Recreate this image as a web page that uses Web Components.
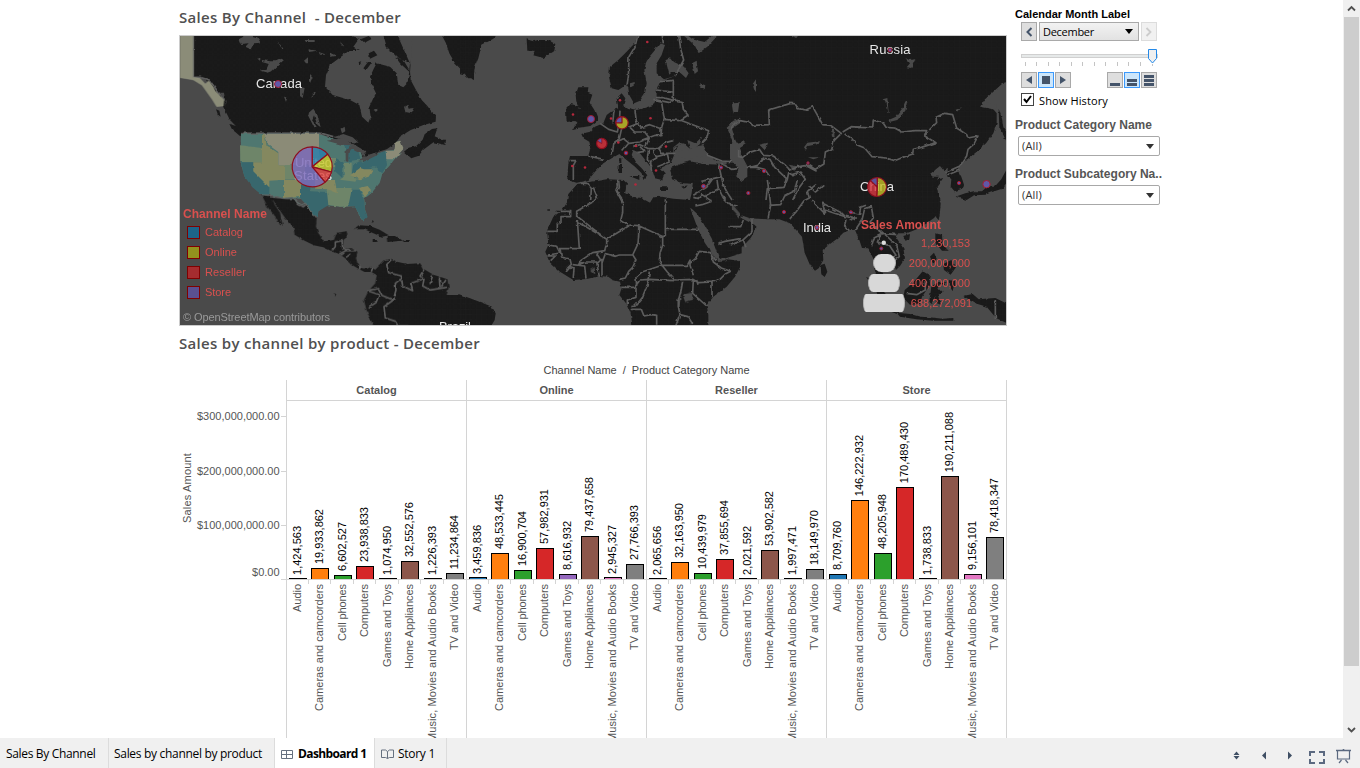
<!DOCTYPE html>
<html lang="en"><head><meta charset="utf-8"><title>Sales dashboard</title>
<style>html,body{margin:0;height:100%;overflow:hidden;background:#fff}body{font-family:"Liberation Sans",Arial,sans-serif}</style></head>
<body><sales-workbook></sales-workbook>
<script>
const define=(name,html,init)=>customElements.define(name,class extends HTMLElement{
 connectedCallback(){if(this.shadowRoot)return;const r=this.attachShadow({mode:'open'});r.innerHTML=typeof html==='function'?html(this):html;if(init)init(this,r);}
});

/* Text tracked to a given advance length (attribute w), horizontal or upright (attribute v). */
define('tracked-text',`<style>:host{display:inline-block;white-space:pre;line-height:1.2}:host([v]) span{writing-mode:vertical-rl;transform:rotate(180deg)}span{display:inline-block}</style><span><slot></slot></span>`,(el,r)=>{
 const w=+el.getAttribute('w');if(!w)return;const s=r.querySelector('span');const b=s.getBoundingClientRect();
 const n=el.textContent.length;s.style.letterSpacing=((w-(el.hasAttribute('v')?b.height:b.width))/n)+'px';
});

define('world-map',`
<style>
:host{display:block;position:relative;box-sizing:border-box;width:828px;height:291px;border:1px solid #ccc;background:#4a4a4a;overflow:hidden}
svg{display:block}
.land{fill:#1a1a1a}.b{fill:none;stroke:#5c5c5c;stroke-width:5;stroke-linejoin:round}.w{fill:#4a4a4a}
.t{font:13px "Liberation Sans",sans-serif;fill:#e6e6e6}
.d{fill:#6058a8;stroke:#a51c30;stroke-width:1}
.key,.size{position:absolute;color:#d9504e;font-size:11px;line-height:20px}
.key{left:3px;top:168px}.key b,.size b{display:block;font-size:12px;height:18px;line-height:20px}
.row{display:flex;align-items:center;gap:5px;height:20px;padding-left:4px}
.key tracked-text{position:relative;top:1px}.key b tracked-text{top:0}
.sw{width:11px;height:11px;border:1px solid #800000}
.size{left:681px;top:179px;width:116px}
.size .row{padding:0;gap:0}.m{width:44px;display:flex;justify-content:center;margin-left:1px}.m i{display:block;height:18px;background:#d8d8d8;border:solid #b4b4b4;border-width:0 1.5px;box-sizing:border-box}
.n{margin-left:auto}
.osm{position:absolute;left:3px;top:275px;font-size:11px;color:#999;line-height:12px}
</style>
<svg width="826" height="289" viewBox="180 36 826 289">
<defs><pattern id="g" width="16" height="16" patternUnits="userSpaceOnUse" x="178" y="37"><path d="M16 0V16H0" fill="none" stroke="#222" stroke-width="1"/></pattern>
<filter id="rough" x="-2%" y="-2%" width="104%" height="104%" color-interpolation-filters="sRGB"><feTurbulence type="fractalNoise" baseFrequency=".19" numOctaves="2" seed="4"/><feDisplacementMap in="SourceGraphic" scale="3" xChannelSelector="R" yChannelSelector="G"/></filter>
<g id="land">
 <g transform="translate(170,0) scale(.33333)">
  <path d="M70 100H715L700 115 712 150 722 185 720 215 722 240 738 270 755 300 772 318 785 335 798 345 797 365 760 375 722 390 690 410 678 428 650 448 625 455 600 480 570 490 555 470 510 425 455 402 220 400 212 404 190 385 182 372 200 380 180 360 162 325 150 300 128 260 108 240 90 232 70 232ZM138 328l10 4 4 18-8-6ZM178 372l20 6 24 26-12 4-24-20ZM702 455l14-12 22-4 20-20 6-16 22-16 16-2-8 24 22 10 12 0-2 16-16-4-20-4-30 22-14 18-22 8ZM815 104H912V240L895 232 880 215 855 190 838 160 828 130Z"/>
 </g>
 <g transform="translate(170,180) scale(.33333)">
  <path d="M275 45L300 50 310 68 330 98 338 137 322 126 312 104 295 84ZM296 48L350 55 375 55 385 75 400 80 410 72 425 95 440 112 438 140 445 160 462 184 492 180 500 158 530 154 532 166 520 184 518 206 545 205 562 215 558 235 562 250 572 264 590 267 604 260 615 270 645 240 664 236 680 245 712 252 750 250 762 268 790 284 832 298 836 320 830 345 870 345 905 360V440H612L600 415 590 392 582 360 596 332 616 310 620 285 604 276 584 276 568 268 548 256 530 238 508 222 486 214 460 202 432 196 404 182 374 164 370 140 346 115 322 80ZM552 148l14-12 34 2 30 12 26 16-20 4-26-10-26-12ZM650 168l28 0 20 14-46 4ZM608 180h14v6h-14ZM700 180h16v6h-16ZM605 120l6 4-4 6ZM492 340l6 2-2 8Z"/>
 </g>
 <g transform="translate(460,30) scale(.33333)">
  <path d="M0 10H115L100 26 65 45 55 85 45 110 40 144 25 145 12 133 0 130ZM200 28l20 6 14-4 30 0 22 12-4 22-32 20-30-8 4-14-22 0Z"/>
  <path d="M355 172l30 0-2 16 14 6-8 24 14 22 8 20 0 12-20 16-40 6-16 4 20-18-14-8 14-14-10-14 14-8-10-22-2-20ZM318 238l14-16 24 6 0 26-8 18-28 4Z"/>
  <path d="M535 10L524 40 500 65 475 90 450 110 447 140 455 175 475 180 498 165 505 175 508 195 522 220 540 212 555 190 560 160 553 120 560 90 585 60 600 40 615 45 605 75 590 100 590 130 612 148 645 138 600 155 590 180 590 205 580 225 560 232 530 240 505 234 490 225 496 205 485 190 470 205 475 235 460 240 440 255 430 280 405 290 390 305 364 312 370 325 388 335 392 352 385 378 330 378 325 400 322 450 350 458 385 450 405 425 430 400 455 385 478 372 500 390 525 410 545 430 550 450 562 436 545 415 528 398 515 375 520 360 540 370 560 395 575 415 585 445 606 450 614 430 600 415 632 400 640 380 655 345 672 340 690 358 704 350 730 345 745 375 770 392 840 400V-10ZM630 415L660 402 690 394 730 402 780 404 845 400V520H690L708 462 670 460 636 448ZM508 438h30v12ZM476 405h10v24h-10ZM478 385h6v14h-6ZM600 472h24v8h-24ZM664 470l16-4-8 10ZM320 520L330 490 352 462 400 455 440 448 490 450 500 460 494 490 515 510 540 520Z"/>
 </g>
 <g transform="translate(460,180) scale(.33333)">
  <path d="M350 15L395 5 470 0 500 10 495 40 520 50 545 55 570 68 580 52 605 50 640 56 690 60 695 40 700 0H845V220L780 240 768 210 755 175 730 130 710 100 690 82 700 110 715 150 735 190 760 225 775 246 840 240V262L825 290 800 320 760 350 740 375 745 405 745 440H518L512 400 500 372 478 345 485 325 480 305 458 300 445 290 420 288 380 297 340 300 300 275 268 245 256 215 265 195 262 160 262 150 280 110 305 92 320 70 325 42ZM262 88h8v4h-8ZM285 92h14v4h-14ZM-5 342L30 355 60 366 96 380 107 400 104 420 92 440H-5Z"/>
 </g>
 <g transform="translate(730,30) scale(.33333)"><path d="M-10 10H832V155L818 160 790 185 765 208 750 230 782 228 800 250 800 280 790 310 768 340 742 364 712 388 690 402 682 420 694 440 702 464 696 476 674 484 662 470 664 448 650 434 654 414 640 420 630 408 600 432 616 450 640 444 620 470 628 510H-10ZM806 236l10 30 4 26 12 18V340l-24-50ZM676 500l30-10 26-6 24 0 14-12 28-6 16-18 16-30V458l-14 18-30 10-20 8-34 2-22 14Z"/></g>
 <g transform="translate(730,180) scale(.33333)"><path d="M-10 -10H626L610 20 622 48 632 70 630 95 612 114 590 130 560 148 530 160 508 160 498 172 520 205 525 235 510 258 498 270 490 246 468 236 450 230 446 250 452 270 466 290 478 320 466 322 440 290 432 262 432 240 415 205 396 204 388 180 375 150 360 150 340 158 324 174 300 192 278 210 280 240 266 265 255 272 240 255 224 218 216 170 190 140 180 130 148 118 110 118 60 115 30 104 14 90 -4 60 -6 90 20 108 45 120 76 136 75 150 62 174 40 198 0 218 -10 215ZM272 255l12-4 8 24-8 16-10-8ZM-10 238L10 240 0 280-10 300ZM520 168l20-6-2 16-12 4ZM622 95l8 2-4 24-8-10ZM616 160l20 4 2 30 18 18-20 0-20-24ZM640 252l24-12 14 22-16 22-20-14ZM600 230l12-12 8 18-10 16ZM408 290l24 16 30 30 30 34 10 32-24-8-32-46ZM524 330l24-20 30-36 24 14-6 32-20 30-6 22-30 2-20-20ZM604 320l14-10 36-4-28 12-6 14 22 0-18 14 8 28-14-6-2-20-10 24-8-6ZM500 398l40 4 30 8 30 2 40 4 30-2 0 8-60 0-50-4-50-8ZM660 300l14 4-6 30-8-14ZM700 348l28-6 18 16 50-4 32 16V428l-30-14-28-34-34-10Z"/></g>
</g></defs>
<g filter="url(#rough)"><use href="#land" class="land"/></g>
<use href="#land" fill="url(#g)" opacity=".8"/>
<g filter="url(#rough)" class="w">
 <g transform="translate(170,0) scale(.33333)">
 <path d="M540 150L500 180 480 195 468 225 465 260 488 285 540 300 568 315 576 350 595 368 602 350 598 320 612 290 618 280 606 255 600 230 612 205 620 190 660 200 680 220 685 255 700 262 712 250 718 215 690 190 676 170 700 180 718 210 720 190 680 170 650 140 640 104H562L545 110 566 118 550 140 570 150ZM682 105l40 90 5-90ZM206 118l26-14 30 8 10 16-20 2-10 18-16-8 10-10-24 2ZM270 212l20-6 6-14-20-6 0-6 24 4 18 0 16-8 8 4-16 14-18 18-16 6ZM322 122l18 24-4 2ZM402 182l12-10 0 18-6 0ZM404 120h30v6h-26ZM416 148l26 4-26 4ZM446 156l24 8-20 0ZM480 158l20 10-20 2ZM342 290l10 2-4 14ZM390 260l14 4-6 30-8-6ZM420 222l8 8-8 20ZM422 290l16-16-4 10ZM412 342l18-16 12 18 10 38-10-8-10-28-6 14 14 20-8 2ZM510 124l14 16-8-4ZM702 320l10-6 4 12 18-2-8 16-20-4ZM610 330l12-4 0 10ZM490 412L520 402 548 412 566 428 540 426ZM528 484l2-28 14-16 8 4-12 24 0 20ZM552 436l26 14 10 18-14-2 -4 22 8-4 32-14-4-8-30 8-4-20-16-12ZM150 278h12l6 40-6-20ZM262 174l10 4-4 4ZM512 388l12-8 2 14-10 6Z"/></g>
 <g fill="#1a1a1a" transform="translate(170,0) scale(.33333)"><path d="M580 205l16-22 8 6-16 22ZM566 186l8-2-6 10ZM596 160l16-8 10 14-22 10ZM572 118l24-10 10 8-22 12ZM656 152l14-6 10 6-18 4Z"/></g>
 <g transform="translate(460,30) scale(.33333)"><path d="M640 378L648 350 668 340 688 362 708 352 720 342 726 320 706 340 682 330 690 356 660 336 640 352ZM616 88l14-6 12 14 30 14 14 20-8 14-20-18-22 0-8 8ZM696 100l14-8 4 32-10 8ZM720 160l16 6-2 12-12-10ZM670 16l34 30 12 24 26-20 30-32-12-4-26 22-36-8-16-12ZM800 290l20-18 20-6v14l-24 16 10 34 16 30-2 24-22-30-2-24ZM818 220l20-2-4 28-12 0ZM510 160l14-4 0 12-14 4ZM640 368l90-20 10 30-60 12Z"/></g>
 <g transform="translate(460,180) scale(.33333)"><path d="M668 345l28-8 2 22-22 8ZM652 356l10-2-4 30-6-2ZM390 270l14-8 2 22ZM815 70l25 30v16l-24-26Z"/></g>
 <g transform="translate(730,30) scale(.33333)"><path d="M0 340l16 0 24-6 8 8-18 12 6 24 16 30 0 32-20 14-14-16 8-22-26-28ZM526 214l6 2-6 26-24 28-24 6-2-6 22-10 20-26ZM458 208l14-4 4 44-4 0-6-32ZM526 84l12 6 18-2-12 26-14-2 10-12ZM676 240l18-8-14 14ZM68 162l10-14 0 38-6-8ZM180 14h34l-16 10ZM222 352l10-14 38-4-4 8-32 6-6 12ZM88 344l26-6-8 24ZM304 304l8-6 2 24-8-2ZM6 226l28-12-20 16-4 22ZM752 230l20-14 28 8 0 16ZM370 288l22 0-4 8ZM176 404l34 6-18 12ZM234 382l36 0-20 6Z"/></g>
</g>
<g filter="url(#rough)" class="b">
 <g transform="translate(170,0) scale(.33333)"><path d="M70 100V232L90 232 118 240 140 270 162 300M222 400H455L490 410"/></g>
 <g transform="translate(170,180) scale(.33333)"><path d="M300 50L350 55 375 55 385 75 400 80 410 72 425 95 440 112M486 212l10-12 0-14 20-4 2 24 20 4M508 222l20-10 30 0M528 232l14-10M568 268l4-10M604 276l4-14M664 238l-14 16 6 24 38 10 4 30 30 14-6-22 34-12M762 268l-12 20 12 10-4 20 22 12 50-8M788 286l-8 26M808 292l2 30M828 300l-14 20M592 332l36 12-10 24-22 14M598 330l28-4 10 20 34 14 8-30-2-20 20-16M676 356l-34 24 4 34 30 10 8 14 30 0 0 8"/></g>
 <g transform="translate(460,30) scale(.33333)"><path d="M535 10l-10 40-18 30-2 60-4 26M606 10l4 30M655 10l8 50 8 30-26 48M600 155l40-4 0 60-30-8-22 0M590 180l48 6M580 208l50 10 10-8 26 4 4 24 14 18-24 14M525 240l4 34 14 18 26-8 34 12 0 22 2-26 8-24-8-50M610 268l50 4 26-18M660 270l86 32-6 24-16 16M420 280l26 18 26 8 6-28 2-36M462 240l-4 40M385 378l46 10M456 374l6-36 16-12 10-44M462 340l28-14 18 14 30-4 30-12-14-18-30 0-14-14M508 290l32-12M506 340l-20 24M520 350l20-6 26 12 28 0 22-18 24-6M546 330l40-14 22 0M568 324l-10 24M594 356l8 14 44 0M566 356l-4 30 14 24M540 350l14 14-24 4M580 360l10 24-18 10 2 26M590 380l32-8 6 24-36 14M328 392h20l-8 14 0 44M360 460l24 0 10 16-2 34M476 452l2 20-6 14 14 20M740 375l46 18 30 2M776 404l8 36-60 14M784 400l30 18 20-2M784 440l8 30 10 18 14 22M700 496l40-24 18-26"/></g>
 <g transform="translate(460,180) scale(.33333)"><path d="M470 0l2 20-4 10 20 38 0 30-6 24 24 16-66 40-90-70 0-14 52-30 10-12-12-30M330 94h-30M332 86V110H300v20l-8 0v24H262M348 122l90 54M352 120l6 86H300M440 176v14l-6 22-36 6-36 24-6 12M508 135l28 2v30l-2 24-16 34-40 0-12 4-30-8-10 28M536 137l70 32h10V58M617 148h100M608 168v28l-8 24-2 22 8 14-60 20-18 16 2 26M518 224l10 16-10 22-12 12-10 20-18 4M564 300l4-22M606 256l16 20 22 24 54-2 18 10 40-2 24-8 16-16 16-8-28-10-24-18-6-20M606 256l46 0 30 0 8-16 0 16 10 30M690 250l16-14 12-22 34 4 16 24M538 300l30-2 74 4M568 300l-8 20-14 34-20 24-12 2M484 322h40l14-20M528 322v30l-26 8v12M512 388h32l8 20 22-4 16 2v28M668 304l-4 24-8 30 0 26 4 20-12 32M660 404l24 6 14 22M700 300l-2 40 42 38M756 306l0 46M710 300l4 14M264 195l26 4 10 20-36 6M262 228l24 0-14 14M300 205l4 26 26 6 4 16-12 12M318 276l14-16 10 4-2 30M338 254l36 4 4 38M356 254l20-8 34 0 8 44M408 218l14 22-10 10M426 236l0 50M700 52l14 4 12-12 30 20-30 10-20 4M735 48l40-22-4-26M776 26l14 28 18 20 26 4M775 190l20-6 45-8"/></g>
 <g transform="translate(730,30) scale(.33333)"><path d="M0 300l14-20 16-8 30 6 8 8 50-2-2-44 66-20 16 2 6 14 24 4 20-10 30 54 24 2 32 24-22 22-6 24-20 10-4 36-26 16-18-12-34 4-24 10-16-16-34-26-30-2-12-18-32 10-18 14-12-2V360M338 306l26-16 26 2 38 2 2-24 30 10 8 12 26 2 22 12 40-4 34 0-6 16 34 20-44 14-24 6-2 14-34 12-20 8-26-8-42-4-22-26-24-10-14-18-22-14M598 300l22-22-2-16 26-12 24 4 12 40 30 20 4 10 30-6-12 24-18 16-4 20-20 30-46 20M655 434l34-14M60 412l24-6 16-22 20 4 14 24 38 36-10 24-50 4-4 34M50 412l30 0 24 6 14 20M172 448l4-20 10 6 24-8 16 22-22 30-16 32M230 408l30 16"/></g>
 <g transform="translate(730,180) scale(.33333)"><path d="M112 0l6 40 4 36-8 40M118 76l34-2 12-26 30-16 8-32M178 118l20-22 24-34 16-8-6-20 26-20M236 16l20 20 24-20M244 60l40 40-6-30 56 28 12 12-62-20M348 118l-4 20 14 14M348 106l28 8-14 6M356 96l32 6 4-20 16-6M376 150l20-30 8-34 20-6 6 34-10 12 22 18 10 16 50 4M424 200l8-26 20-10-10 22 36 10 20 30-14 10M450 150l20 18 30 28 8 34-18 14M66 115l0 40-26 24-38 16M40 120l-8 20-34 0M40 180l8 22M440 290l24-4M530 340l30 4 26-14 0-28M796 360V418" /></g>
</g>
<g transform="translate(170,0) scale(.33333)" fill="#8b8c78" stroke="#999a88" stroke-width="1"><path d="M30 104H69V232L90 235 106 252 116 242 128 258 136 274 148 286 162 300 160 318 140 320 126 298 112 278 96 256 70 240 30 233Z"/></g>
<g filter="url(#rough)"><g transform="translate(235,128) scale(.33333)">
 <path fill="#4f7770" d="M18 18H252L320 40 375 65 385 102 420 80 455 68 480 66 485 42 495 38 505 62 475 98 465 112 442 138 434 165 410 195 388 212 390 240 396 265 388 282 372 262 360 235 320 236 275 232 250 250 248 265 235 260 215 230 198 212 147 210 103 200 80 200 60 182 28 145 16 100Z"/>
 <path fill="#6e8569" d="M15 52L81 60V103H16ZM150 112h60v42h-60ZM276 180h74v54l-32 2-42-6ZM315 155l20-16 36 4-10 18ZM328 105h22v36h-20ZM272 90h30v30h-30Z"/>
 <path fill="#38676d" d="M18 103H55V130L103 178V200H80L52 178 28 145ZM198 170h28v20l50 2 4 40-30 18-2 15-13-5-20-30-17-18ZM302 90l24 14-4 46-22-20ZM355 108l22-8 36 24-32 14-20 16-10-20ZM385 100l35-20 32-12 4 44-14 24-22-18-35 2ZM325 40l40 14 12 40-36 6ZM350 185h24l12 28 4 30 8 24-12 12-14-20-12-24-20-1Z"/>
 <path fill="#84885f" d="M81 18h8l6 34 35 24v36h20v43l-47 3v20L55 130v-27h26ZM147 155h51v52l-51 3ZM345 142l30-22 12 4 28 0-14 22-26 8ZM372 180l26-6 10 12-18 22ZM240 156h60l6 40-30-12-36-2Z"/>
 <path fill="#8b8b77" d="M88 18H252V70L258 112H130V72L100 50ZM452 68h26l4-26 14-4 10 24-30 32-22 0Z"/>
 <path fill="#4a4a4a" d="M275 38l50-8 40 24 30 18-14 6-22-10-14-16-26-2ZM332 100l0-32 12-14 10 4-14 22 0 22ZM370 100l14-12 40-16 2 10-36 18Z"/>
 <path fill="none" stroke="#5e6866" stroke-width="3" d="M18 16H255M80 201L103 201 147 211 172 208 185 222 200 230 212 225 235 264"/>
</g></g>
<g class="t"><text x="256" y="88" textLength="46">Canada</text><text x="295" y="167" textLength="37">United</text><text x="294" y="180" textLength="38">States</text><text x="869.500" y="54" textLength="41">Russia</text><text x="860" y="191" textLength="34">China</text><text x="803" y="232" textLength="28">India</text><text x="439" y="331" textLength="32">Brazil</text></g>
<g stroke="#8d1020" stroke-width="1.2" stroke-linejoin="round">
 <g transform="translate(312.200,166.800)" fill-opacity=".8"><path fill="#277fae" d="M0 0V-20A20 20 0 0 1 15.500-12.600Z"/><path fill="#c8c828" d="M0 0L15.500-12.600A20 20 0 0 1 19.300 5.200Z"/><path fill="#e5403d" d="M0 0L19.300 5.200A20 20 0 0 1 12.800 15.400Z"/><path fill="#7a68bc" d="M0 0L12.800 15.400A20 20 0 1 1 0-20Z"/></g>
 <g transform="translate(877.200,187)" fill-opacity=".8"><path fill="#c8c028" d="M0 0V-9.500A9.500 9.500 0 0 1-.5 9.500Z"/><path fill="#dc3a42" d="M0 0L-.5 9.500A9.500 9.500 0 0 1-6.800-6.600Z"/><path fill="#6a60b8" d="M0 0L-6.800-6.600A9.500 9.500 0 0 1 0-9.500Z"/></g>
 <g transform="translate(622,122.800)"><circle r="6.200" fill="#a8a427"/><path fill="#6058a8" d="M0 0H-6.200A6.200 6.200 0 0 1 0-6.200Z"/></g>
 <g transform="translate(601.800,143.500)"><circle r="5.200" fill="#b93038"/><path fill="#6058a8" stroke-width=".8" d="M0 0L-4.500-2.500A5.200 5.200 0 0 1 0-5.200Z"/></g>
</g>
<g class="d"><circle cx="278" cy="84" r="3.500"/><circle cx="591" cy="119" r="3.500"/><circle cx="986.500" cy="184.200" r="3.700"/><circle cx="626" cy="153" r="1.800"/><circle cx="703.500" cy="186.300" r="2"/><circle cx="721" cy="167.500" r="1.600"/><circle cx="764" cy="171" r="1.600"/><circle cx="748.300" cy="193" r="1.600"/><circle cx="784" cy="212" r="1.600"/><circle cx="890" cy="50" r="1.900"/><circle cx="817" cy="227.500" r="1.900"/><circle cx="959" cy="183" r="1.600"/><circle cx="851" cy="212.300" r="1.500"/><circle cx="881.300" cy="248.500" r="1.500"/><circle cx="808" cy="163" r="1.200"/></g>
<g fill="#b5283c"><circle cx="647.300" cy="42" r="1.300"/><circle cx="620" cy="100.300" r="1.300"/><circle cx="573" cy="114.500" r="1.300"/><circle cx="611" cy="118.500" r="1.300"/><circle cx="650.500" cy="118.300" r="1.300"/><circle cx="618.300" cy="142.500" r="1.300"/><circle cx="636" cy="146" r="1.300"/><circle cx="666" cy="146.500" r="1.300"/><circle cx="656" cy="170.500" r="1.300"/><circle cx="635.500" cy="184.500" r="1.300"/><circle cx="572.300" cy="166" r="1.300"/><circle cx="585" cy="167.500" r="1.300"/></g>
<circle cx="883.800" cy="242.700" r="2.200" fill="#ddd"/>
</svg>
<div class="key"><b><tracked-text w="84">Channel Name</tracked-text></b>
<div class="row"><span class="sw" style="background:#1d6489"></span><tracked-text w="38">Catalog</tracked-text></div><div class="row"><span class="sw" style="background:#93921e"></span><tracked-text w="32">Online</tracked-text></div><div class="row"><span class="sw" style="background:#a52c2f"></span><tracked-text w="41">Reseller</tracked-text></div><div class="row"><span class="sw" style="background:#5a5090"></span><tracked-text w="26">Store</tracked-text></div></div>
<div class="size"><b><tracked-text w="80">Sales Amount</tracked-text></b>
<div class="row"><span class="n" style="margin-right:7px">1,230,153</span></div><div class="row"><span class="m"><i style="width:23px;border-radius:8px/9px"></i></span><span class="n" style="margin-right:7px">200,000,000</span></div><div class="row"><span class="m"><i style="width:32px;border-radius:5px/9px"></i></span><span class="n" style="margin-right:7px">400,000,000</span></div><div class="row"><span class="m"><i style="width:42px;border-radius:3px/9px"></i></span><span class="n" style="margin-right:5px">688,272,091</span></div></div>
<div class="osm"><tracked-text w="147">© OpenStreetMap contributors</tracked-text></div>`);

const cats=[['Audio','#1f77b4',28],['Cameras and camcorders','#ff7f0e',127],['Cell phones','#2ca02c',57],['Computers','#d62728',53],['Games and Toys','#9467bd',83],['Home Appliances','#8c564b',85],['Music, Movies and Audio Books','#e377c2',158],['TV and Video','#7f7f7f',66]];
const panels=[['Catalog',[1424563,19933862,6602527,23938833,1074950,32552576,1226393,11234864]],['Online',[3459836,48533445,16900704,57982931,8616932,79437658,2945327,27766393]],['Reseller',[2065656,32163950,10439979,37855694,2021592,53902582,1997471,18149970]],['Store',[8709760,146222932,48205948,170489430,1738833,190211088,9156101,78418347]]];

define('sales-bar',el=>{const v=+el.getAttribute('value'),h=Math.max(1,Math.round(v*.0000005415));return `<style>
:host{display:flex;flex-direction:column;width:22.5px;height:178px;justify-content:flex-end;align-items:center}
.v{font-size:11px;color:#000;line-height:13px;margin:0 1px ${h<3?0:1}px 0}
.bar{width:18px;box-sizing:border-box;border:1px solid #000;border-bottom:0;background:${el.getAttribute('color')}}</style>
<tracked-text class="v" v>${v.toLocaleString('en-US')}</tracked-text><div class="bar" style="height:${h}px"></div>`});

define('channel-panel',el=>{const [name,vals]=panels[+el.getAttribute('index')];return `<style>
:host{display:block;width:180px;height:358px;box-sizing:border-box;border-left:1px solid #d4d4d4;overflow:hidden}
:host([last]){border-right:1px solid #d4d4d4;width:181px}
h3{margin:0;height:20px;line-height:20px;font-size:11px;color:#555;text-align:center;border-bottom:1px solid #d4d4d4}
.plot,.names{display:flex;width:180px;margin-left:-.75px}.plot{border-bottom:1px solid #d4d4d4;height:178px}
.names{font-size:11px;color:#555}
.names div{width:22.5px;box-sizing:border-box;display:flex;justify-content:center;padding-top:4px;position:relative}
.names div+div:before{content:"";position:absolute;left:-1px;top:0;width:1px;height:4px;background:#d4d4d4}
</style><h3>${name}</h3><div class="plot">${vals.map((v,i)=>`<sales-bar value="${v}" color="${cats[i][1]}"></sales-bar>`).join('')}</div><div class="names">${cats.map(c=>`<div><tracked-text v w="${c[2]}">${c[0]}</tracked-text></div>`).join('')}</div>`});

define('sales-chart',`<style>
:host{display:block;width:828px}
.cap{font-size:11px;color:#444;line-height:14px;height:17px;padding-left:364.500px}
.body{display:flex}
.y{width:18px;height:358px;display:flex;align-items:flex-start;justify-content:center;padding-top:73px;box-sizing:border-box;font-size:11px;color:#555}
.ticks{width:89px;height:358px;box-sizing:border-box;padding-top:28px;display:grid;grid-template-rows:55px 54px 47px 20px;font-size:11px;line-height:16px;color:#555}
.ticks div{display:flex;justify-content:flex-end;align-items:flex-start}
.ticks i{width:5px;height:1px;background:#d4d4d4;margin:8px 0 0 1.500px}
</style><div class="cap"><tracked-text w="206">Channel Name  /  Product Category Name</tracked-text></div>
<div class="body"><div class="y"><tracked-text v w="70">Sales Amount</tracked-text></div>
<div class="ticks"><div>$300,000,000.00<i></i></div><div>$200,000,000.00<i></i></div><div>$100,000,000.00<i></i></div><div>$0.00<i style="margin-top:15px"></i></div></div>
<channel-panel index="0"></channel-panel><channel-panel index="1"></channel-panel><channel-panel index="2"></channel-panel><channel-panel index="3" last></channel-panel></div>`);

define('filter-select',`<style>:host{display:block;width:142px;margin-left:3px}
.f{display:flex;align-items:center;justify-content:space-between;box-sizing:border-box;width:142px;height:20px;border:1px solid #a8a8a8;border-radius:2px;background:#fff;padding:0 5px 0 3px;font:11px "Open Sans",sans-serif;color:#333}</style>
<div class="f"><tracked-text w="20">(All)</tracked-text><svg width="8" height="5"><path d="M0 0H8L4 5Z" fill="#333"/></svg></div>`);

define('icon-button',`<style>:host{display:flex;align-items:center;justify-content:center;width:16px;height:16px;box-sizing:border-box;border:1px solid #a9a9a9;background:#dedede}
:host([on]){border-color:#3b99fc;background:#cce6fb}:host([off]){border-color:#dcdcdc;background:#f1f1f1}:host([tall]){height:19px}</style><slot></slot>`);

define('filter-pane',`<style>
:host{display:block;width:150px}
h4{margin:0;font-size:11px;line-height:14px;color:#000;height:15px}
h4.g{font-size:12px;color:#555;height:16px;line-height:14px}
.r{display:flex;align-items:center}
.sel{display:flex;align-items:center;justify-content:space-between;width:100px;height:19px;box-sizing:border-box;border:1px solid #a9a9a9;background:linear-gradient(#f2f2f2,#e2e2e2);font:11px "Open Sans",sans-serif;color:#000;padding:0 5px 0 3px}
.play{padding-left:6px;gap:1px;height:16px;margin-top:3px}
.hist{padding-left:6px;gap:5px;font:11px "Open Sans",sans-serif;margin-top:3px;height:18px}
.hist tracked-text{position:relative;top:1px}
.cb{width:13px;height:13px;box-sizing:border-box;border:1px solid #444;margin-top:-2px}
svg{display:block}
</style>
<h4><tracked-text w="115">Calendar Month Label</tracked-text></h4>
<div class="r" style="padding-left:6px;gap:2px"><icon-button tall><svg width="8" height="10"><path d="M6.500 1L2.500 5 6.500 9" fill="none" stroke="#44546a" stroke-width="2"/></svg></icon-button><div class="sel"><tracked-text w="51">December</tracked-text><svg width="8" height="5"><path d="M0 0H8L4 5Z"/></svg></div><icon-button tall off><svg width="8" height="10"><path d="M1.500 1L5.500 5 1.500 9" fill="none" stroke="#ccc" stroke-width="1.800"/></svg></icon-button></div>
<svg width="145" height="28" viewBox="1015 41 145 28"><rect x="1021.500" y="54.500" width="136" height="3" fill="#e6e9e9" stroke="#d0d0d0"/><path d="M1025.500 62v4M1036.500 62v4M1048.500 62v4M1059.500 62v4M1071.500 62v4M1082.500 62v4M1094.500 62v4M1105.500 62v4M1117.500 62v4M1128.500 62v4M1140.500 62v4M1152.500 64v2" stroke="#c4c4c4"/><path d="M1148.500 49.500h8v9l-4 4.500-4-4.500Z" fill="#f0f0f0" stroke="#2489e8"/></svg>
<div class="r play"><icon-button><svg width="6" height="8"><path d="M6 0V8L0 4Z" fill="#44546a"/></svg></icon-button><icon-button on><svg width="8" height="8"><path d="M0 0H8V8H0Z" fill="#44546a"/></svg></icon-button><icon-button><svg width="6" height="8"><path d="M0 0V8L6 4Z" fill="#44546a"/></svg></icon-button>
<icon-button style="margin-left:35px"><svg width="10" height="12"><path d="M0 9H10V12H0Z" fill="#44546a"/></svg></icon-button><icon-button on><svg width="10" height="12"><path d="M0 5H10V8H0ZM0 9H10V12H0Z" fill="#44546a"/></svg></icon-button><icon-button><svg width="10" height="12"><path d="M0 1H10V4H0ZM0 5H10V8H0ZM0 9H10V12H0Z" fill="#44546a"/></svg></icon-button></div>
<div class="r hist"><span class="cb"><svg width="11" height="11"><path d="M2 5L4.500 8 9 2" fill="none" stroke="#000" stroke-width="2"/></svg></span><tracked-text w="69">Show History</tracked-text></div>
<h4 class="g" style="margin-top:9px;height:18px"><tracked-text w="137">Product Category Name</tracked-text></h4><filter-select></filter-select>
<h4 class="g" style="margin-top:11px;height:18px"><tracked-text w="147">Product Subcategory Na..</tracked-text></h4><filter-select></filter-select>`);

define('scroll-bar',`<style>:host{display:flex;flex-direction:column;width:17px;height:738px;background:#f0f0f0}
svg{display:block}.t{height:649px;background:#cdcdcd;margin:0 1px;flex:none}.s{flex:1}</style>
<svg width="17" height="17"><path d="M5 10.500L8.500 7 12 10.500" fill="none" stroke="#505050" stroke-width="1.800"/></svg><div class="t"></div><div class="s"></div><svg width="17" height="17"><path d="M5 7L8.500 10.500 12 7" fill="none" stroke="#505050" stroke-width="1.800"/></svg>`);

define('sheet-tab',`<style>:host{display:flex;align-items:center;gap:5px;box-sizing:border-box;height:30px;border-right:1px solid #dcdcdc;font:12px/30px "Open Sans",sans-serif;color:#000;padding:2px 0 0 6px}
:host([on]){background:#fff;font-weight:700}</style><slot></slot>`);

define('tab-strip',`<style>:host{display:flex;height:30px;background:#f0f0f0}.s{flex:1}svg{display:block}</style>
<sheet-tab style="width:109px"><tracked-text w="89.5">Sales By Channel</tracked-text></sheet-tab><sheet-tab style="width:166px;padding-left:5px"><tracked-text w="148">Sales by channel by product</tracked-text></sheet-tab>
<sheet-tab on style="width:100px"><svg width="12" height="9"><path d="M.5.5H11.500V8.500H.5ZM5.500.5V8.500M.5 4.500H11.500" fill="none" stroke="#667180"/></svg><tracked-text w="68.5">Dashboard 1</tracked-text></sheet-tab>
<sheet-tab style="width:72px;gap:4px"><svg width="13" height="10"><path d="M.5 1H4.500L6.500 2.500 8.500 1H12.500V8.500H8.500L6.500 9.500 4.500 8.500H.5ZM6.500 2.500V9.500" fill="none" stroke="#667180"/></svg><tracked-text w="37">Story 1</tracked-text></sheet-tab><div class="s"></div>
<svg width="135" height="30" viewBox="1225 738 135 30"><g fill="#3f4f64"><path d="M1236.500 751.500l3 3.500h-6ZM1236.500 759.500l3-3.500h-6ZM1266 751.500v8l-4-4ZM1288 751.500v8l4-4Z"/></g><g fill="none" stroke="#5b6980"><path d="M1310 756v-4h5M1319 752h5v4M1324 759v4h-5M1315 763h-5v-4" stroke-width="2"/><path d="M1336 750.500h15M1343.500 749v2" stroke-width="1.600"/><path d="M1337.500 751v8h12V751M1341.500 760l-2.500 3M1345.500 760l2.500 3" stroke-width="1.200"/></g></svg>`);

define('sales-workbook',`<style>
:host{display:flex;flex-direction:column;width:1360px;height:768px;background:#fff}
.top{display:flex;height:738px;overflow:hidden}.left{margin-left:179px;width:828px}
h2{margin:0;font:600 15px/20px "Open Sans",sans-serif;color:#505050;height:35px;padding-top:7px;box-sizing:border-box}
.h2{height:37px}
filter-pane{margin:7px 0 0 8px}scroll-bar{margin-left:auto}
</style><div class="top"><div class="left"><h2><tracked-text w="222">Sales By Channel  - December</tracked-text></h2><world-map></world-map><h2 class="h2"><tracked-text w="301">Sales by channel by product - December</tracked-text></h2><sales-chart></sales-chart></div><filter-pane></filter-pane><scroll-bar></scroll-bar></div><tab-strip></tab-strip>`);
</script></body></html>
